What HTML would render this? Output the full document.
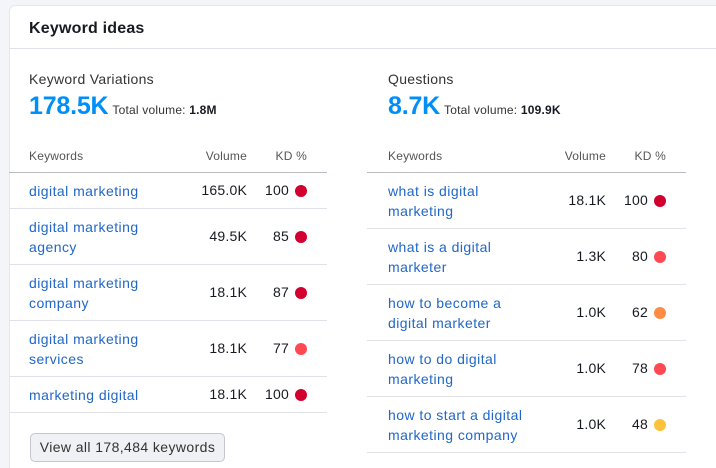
<!DOCTYPE html>
<html><head><style>
*{margin:0;padding:0;box-sizing:border-box}
html,body{width:716px;height:468px;overflow:hidden}
body{background:#f4f5f9;font-family:"Liberation Sans",Arial,sans-serif;position:relative;color:#171a22}
.card{position:absolute;left:9px;top:5px;width:720px;height:480px;background:#fff;border:1px solid #e6e7ed;border-radius:6px}
.a{position:absolute;white-space:nowrap}
.sub{font-size:14px;color:#333;letter-spacing:0.3px}
.big{font-size:25px;font-weight:bold;color:#008ff8;letter-spacing:-0.2px}
.tv{font-size:12px;color:#333;margin-left:4px;font-weight:normal;letter-spacing:0.2px}
.tv b{color:#171a22}
.th{font-size:12px;color:#555;letter-spacing:0.2px}
.line{position:absolute;height:1px;background:#e0e1e9}
.link{color:#2067c9;font-size:14px;line-height:20px;letter-spacing:0.45px}
.n{font-size:14px;text-align:right;letter-spacing:0.2px}
.dot{position:absolute;width:12px;height:12px;border-radius:50%}
.btn{position:absolute;left:30px;top:433px;width:195px;height:29px;border:1px solid #c4c7cf;border-radius:5px;background:#f0f1f5;font-size:14px;line-height:27px;color:#333;text-align:center;letter-spacing:0.4px;white-space:nowrap}
</style></head><body>
<div class="card"></div>
<div style="position:absolute;left:9px;top:5px;width:707px;height:44px;border-bottom:1px solid #e0e1e9"></div>
<div class="a" style="left:29px;top:20px;font-size:16px;font-weight:bold;letter-spacing:0.2px">Keyword ideas</div>

<div class="a sub" style="left:29px;top:71px">Keyword Variations</div>
<div class="a big" style="left:29px;top:92px">178.5K<span class="tv">Total volume: <b>1.8M</b></span></div>
<div class="a sub" style="left:388px;top:71px">Questions</div>
<div class="a big" style="left:388px;top:92px">8.7K<span class="tv">Total volume: <b>109.9K</b></span></div>

<div class="a th" style="left:29px;top:149px">Keywords</div>
<div class="a th" style="left:187px;top:149px;width:60px;text-align:right">Volume</div>
<div class="a th" style="left:257px;top:149px;width:50px;text-align:right">KD %</div>
<div class="line" style="left:9px;width:318px;top:172px;background:#b8bac4"></div>

<div class="a th" style="left:388px;top:149px">Keywords</div>
<div class="a th" style="left:546px;top:149px;width:60px;text-align:right">Volume</div>
<div class="a th" style="left:616px;top:149px;width:50px;text-align:right">KD %</div>
<div class="line" style="left:367px;width:319px;top:172px;background:#b8bac4"></div>

<div class="a link" style="left:29px;top:181px">digital marketing</div>
<div class="a n" style="left:167px;top:182px;width:80px">165.0K</div>
<div class="a n" style="left:249px;top:182px;width:40px">100</div>
<div class="dot" style="left:295px;top:185px;background:#d1002f"></div>
<div class="line" style="left:9px;width:318px;top:208px"></div>

<div class="a link" style="left:29px;top:217px">digital marketing<br>agency</div>
<div class="a n" style="left:167px;top:228px;width:80px">49.5K</div>
<div class="a n" style="left:249px;top:228px;width:40px">85</div>
<div class="dot" style="left:295px;top:231px;background:#d1002f"></div>
<div class="line" style="left:9px;width:318px;top:264px"></div>

<div class="a link" style="left:29px;top:273px">digital marketing<br>company</div>
<div class="a n" style="left:167px;top:284px;width:80px">18.1K</div>
<div class="a n" style="left:249px;top:284px;width:40px">87</div>
<div class="dot" style="left:295px;top:287px;background:#d1002f"></div>
<div class="line" style="left:9px;width:318px;top:320px"></div>

<div class="a link" style="left:29px;top:329px">digital marketing<br>services</div>
<div class="a n" style="left:167px;top:340px;width:80px">18.1K</div>
<div class="a n" style="left:249px;top:340px;width:40px">77</div>
<div class="dot" style="left:295px;top:343px;background:#ff4953"></div>
<div class="line" style="left:9px;width:318px;top:376px"></div>

<div class="a link" style="left:29px;top:385px">marketing digital</div>
<div class="a n" style="left:167px;top:386px;width:80px">18.1K</div>
<div class="a n" style="left:249px;top:386px;width:40px">100</div>
<div class="dot" style="left:295px;top:389px;background:#d1002f"></div>
<div class="line" style="left:9px;width:318px;top:412px"></div>

<div class="btn">View all 178,484 keywords</div>

<div class="a link" style="left:388px;top:181px">what is digital<br>marketing</div>
<div class="a n" style="left:526px;top:192px;width:80px">18.1K</div>
<div class="a n" style="left:608px;top:192px;width:40px">100</div>
<div class="dot" style="left:654px;top:195px;background:#d1002f"></div>
<div class="line" style="left:367px;width:319px;top:228px"></div>

<div class="a link" style="left:388px;top:237px">what is a digital<br>marketer</div>
<div class="a n" style="left:526px;top:248px;width:80px">1.3K</div>
<div class="a n" style="left:608px;top:248px;width:40px">80</div>
<div class="dot" style="left:654px;top:251px;background:#ff4953"></div>
<div class="line" style="left:367px;width:319px;top:284px"></div>

<div class="a link" style="left:388px;top:293px">how to become a<br>digital marketer</div>
<div class="a n" style="left:526px;top:304px;width:80px">1.0K</div>
<div class="a n" style="left:608px;top:304px;width:40px">62</div>
<div class="dot" style="left:654px;top:307px;background:#ff8c43"></div>
<div class="line" style="left:367px;width:319px;top:340px"></div>

<div class="a link" style="left:388px;top:349px">how to do digital<br>marketing</div>
<div class="a n" style="left:526px;top:360px;width:80px">1.0K</div>
<div class="a n" style="left:608px;top:360px;width:40px">78</div>
<div class="dot" style="left:654px;top:363px;background:#ff4953"></div>
<div class="line" style="left:367px;width:319px;top:396px"></div>

<div class="a link" style="left:388px;top:405px">how to start a digital<br>marketing company</div>
<div class="a n" style="left:526px;top:416px;width:80px">1.0K</div>
<div class="a n" style="left:608px;top:416px;width:40px">48</div>
<div class="dot" style="left:654px;top:419px;background:#fdc23c"></div>
<div class="line" style="left:367px;width:319px;top:452px"></div>
</body></html>
